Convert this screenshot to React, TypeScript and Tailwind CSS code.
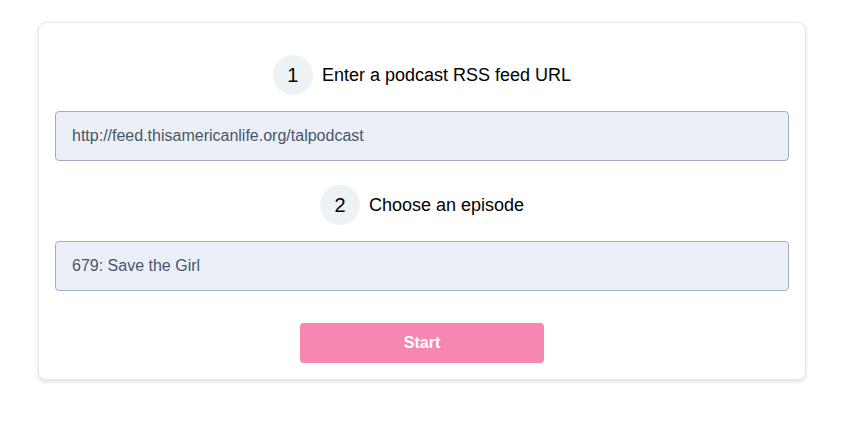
import React from "react";

function Step({ n, label }: { n: number; label: string }) {
  return (
    <div className="flex items-center justify-center gap-[9px]">
      <div className="flex h-10 w-10 items-center justify-center rounded-full bg-[#edf2f7] text-[20px] text-black">
        {n}
      </div>
      <span className="text-[18px] text-black">{label}</span>
    </div>
  );
}

function Field({ value }: { value: string }) {
  return (
    <div className="flex h-[50px] items-center rounded-[4px] border border-[#a0aec0] bg-[#ebf0f8] px-4 text-[16px] text-[#4a5568]">
      {value}
    </div>
  );
}

export default function App() {
  return (
    <div className="min-h-[424px] bg-white pt-[22px] pl-[38px]" style={{ fontFamily: '"Liberation Sans", Arial, sans-serif' }}>
      <div className="flex w-[768px] flex-col rounded-lg border border-[#e2e8f0] bg-white px-4 pt-8 pb-4 shadow-[0_2px_4px_rgba(0,0,0,0.12)]">
        <Step n={1} label="Enter a podcast RSS feed URL" />
        <div className="mt-4">
          <Field value="http://feed.thisamericanlife.org/talpodcast" />
        </div>
        <div className="mt-6">
          <Step n={2} label="Choose an episode" />
        </div>
        <div className="mt-4">
          <Field value="679: Save the Girl" />
        </div>
        <div className="mt-8 flex justify-center">
          <button className="h-10 w-[244px] rounded-[4px] bg-[#f687b3] text-[16px] font-bold text-white">
            Start
          </button>
        </div>
      </div>
    </div>
  );
}
